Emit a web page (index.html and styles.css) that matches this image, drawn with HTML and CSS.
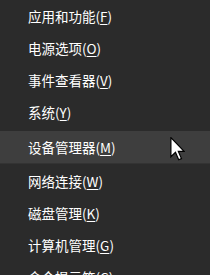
FILE: index.html
```html
<!DOCTYPE html>
<html lang="zh-CN">
<head>
    <meta charset="UTF-8">
    <meta name="viewport" content="width=device-width, initial-scale=1.0">
    <title>Win+X</title>
    <link rel="stylesheet" href="styles.css">
</head>
<body>
    <div class="menu">
        <div class="menu-item">应用和功能(<u>F</u>)</div>
        <div class="menu-item">电源选项(<u>O</u>)</div>
        <div class="menu-item">事件查看器(<u>V</u>)</div>
        <div class="menu-item">系统(<u>Y</u>)</div>
        <div class="menu-item menu-item-hover">设备管理器(<u>M</u>)</div>
        <div class="menu-item">网络连接(<u>W</u>)</div>
        <div class="menu-item">磁盘管理(<u>K</u>)</div>
        <div class="menu-item">计算机管理(<u>G</u>)</div>
        <div class="menu-item">命令提示符(<u>C</u>)</div>

        <svg class="cursor" width="15" height="24" viewBox="0 0 12 20">
            <path d="M0.5 0.5 L0.5 16.5 L4.3 12.8 L7 19 L9.3 18 L6.7 12 L11.5 12 Z" fill="#fff" stroke="#000" stroke-width="1" stroke-linejoin="miter"/>
        </svg>
    </div>
</body>
</html>
```

FILE: styles.css
```css
body {
    margin: 0;
    background-color: #2b2b2b;
    font-family: "Noto Sans CJK SC", "Noto Sans", sans-serif;
    overflow: hidden;
}

.menu {
    position: relative;
    width: 210px;
    height: 275px;
    overflow: hidden;
}

.menu-item {
    height: 32px;
    line-height: 32px;
    padding-left: 28px;
    font-size: 13.5px;
    color: #fff;
    white-space: nowrap;
}

.menu-item u {
    text-underline-offset: 2px;
}

.menu-item-hover {
    margin-top: 3px;
    margin-bottom: 2px;
    background-color: #3e3e3e;
    box-shadow: 0 1px 0 #333;
}

.cursor {
    position: absolute;
    left: 170px;
    top: 137px;
}
```
